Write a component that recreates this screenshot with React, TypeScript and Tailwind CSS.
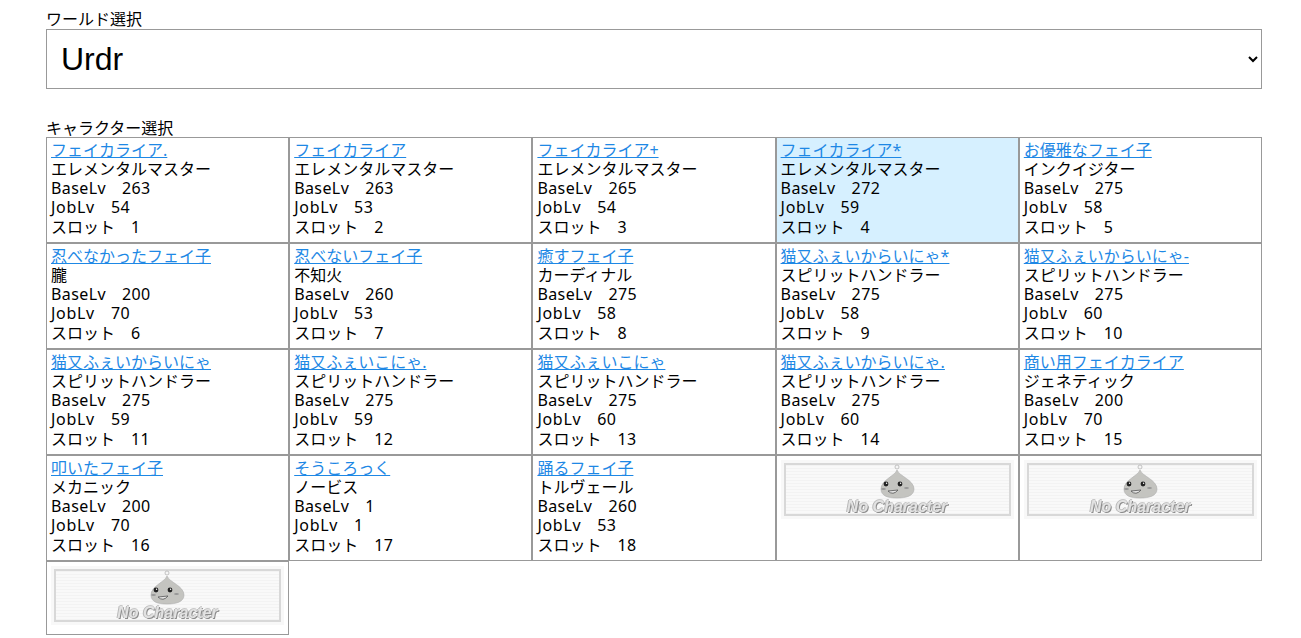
const characters = [
  { name: "フェイカライア.", job: "エレメンタルマスター", base: 263, jobLv: 54 },
  { name: "フェイカライア", job: "エレメンタルマスター", base: 263, jobLv: 53 },
  { name: "フェイカライア+", job: "エレメンタルマスター", base: 265, jobLv: 54 },
  { name: "フェイカライア*", job: "エレメンタルマスター", base: 272, jobLv: 59 },
  { name: "お優雅なフェイ子", job: "インクイジター", base: 275, jobLv: 58 },
  { name: "忍べなかったフェイ子", job: "朧", base: 200, jobLv: 70 },
  { name: "忍べないフェイ子", job: "不知火", base: 260, jobLv: 53 },
  { name: "癒すフェイ子", job: "カーディナル", base: 275, jobLv: 58 },
  { name: "猫又ふぇいからいにゃ*", job: "スピリットハンドラー", base: 275, jobLv: 58 },
  { name: "猫又ふぇいからいにゃ-", job: "スピリットハンドラー", base: 275, jobLv: 60 },
  { name: "猫又ふぇいからいにゃ", job: "スピリットハンドラー", base: 275, jobLv: 59 },
  { name: "猫又ふぇいこにゃ.", job: "スピリットハンドラー", base: 275, jobLv: 59 },
  { name: "猫又ふぇいこにゃ", job: "スピリットハンドラー", base: 275, jobLv: 60 },
  { name: "猫又ふぇいからいにゃ.", job: "スピリットハンドラー", base: 275, jobLv: 60 },
  { name: "商い用フェイカライア", job: "ジェネティック", base: 200, jobLv: 70 },
  { name: "叩いたフェイ子", job: "メカニック", base: 200, jobLv: 70 },
  { name: "そうころっく", job: "ノービス", base: 1, jobLv: 1 },
  { name: "踊るフェイ子", job: "トルヴェール", base: 260, jobLv: 53 },
];

function NoCharacter() {
  return (
    <div className="relative h-[59px] w-[233px] bg-[#f8f8f8] p-[3px]">
      <div className="h-full w-full border-2 border-[#d8d8d8] bg-[repeating-linear-gradient(0deg,#f3f3f3_0px,#f3f3f3_1px,#f9f9f9_1px,#f9f9f9_3px)]" />
      <svg viewBox="0 0 40 40" className="absolute top-[3px] left-[96px] h-[40px] w-[40px] blur-[0.4px]">
        <circle cx="20" cy="4" r="2" fill="#f6f6f6" stroke="#b5b5b5" strokeWidth="0.8" />
        <path d="M20 7 C22 13 37 17 37 26 C37 33 29 35 20 35 C11 35 4 33 4 26 C4 17 18 13 20 7 Z" fill="#c4c4c0" stroke="#adadad" strokeWidth="0.6" />
        <circle cx="9" cy="21" r="2.4" fill="#222" />
        <circle cx="23" cy="21" r="2.4" fill="#222" />
        <circle cx="9.6" cy="20.2" r="0.7" fill="#fff" />
        <circle cx="23.6" cy="20.2" r="0.7" fill="#fff" />
        <path d="M11 28 Q16 33 21 27 Z" fill="#e6e6e6" stroke="#555" strokeWidth="0.8" />
        <ellipse cx="6.5" cy="26" rx="2.4" ry="0.9" fill="#979797" />
        <ellipse cx="29.5" cy="25" rx="2.4" ry="0.9" fill="#979797" />
      </svg>
      <span className="absolute inset-x-0 top-[37px] text-center font-['Liberation_Sans',sans-serif] text-[16px] leading-[20px] font-bold text-[#e2e2e2] italic blur-[0.3px] [text-shadow:1px_1px_0_#8c8c8c,-1px_0_0_#b8b8b8,0_-1px_0_#c8c8c8]">
        No Character
      </span>
    </div>
  );
}

function Cell({ children, active, empty }: { children: React.ReactNode; active?: boolean; empty?: boolean }) {
  return (
    <div
      className={`border border-[#999] px-1 ${empty ? "pt-1 pb-[9px]" : "pt-[2.4px] pb-[5.6px]"} ${active ? "bg-[#d6f0ff]" : "bg-white"}`}
    >
      {children}
    </div>
  );
}

export default function App() {
  return (
    <div className="ml-[46px] w-[1216px] pt-[10px] font-['Noto_Sans','Noto_Sans_CJK_JP',sans-serif] text-base leading-[19.2px] text-black">
      <label className="block">ワールド選択</label>
      <select className="block h-[60px] w-full border border-[#999] bg-white px-[10px] font-['Liberation_Sans',sans-serif] text-[32px] text-black">
        <option>Urdr</option>
      </select>

      <div className="mt-[30px] h-[18.2px]">キャラクター選択</div>
      <div className="grid grid-cols-5">
        {characters.map((c, i) => (
          <Cell key={i} active={i === 3}>
            <a href="#" className="text-[#1e88e5] underline">{c.name}</a>
            <div>{c.job}</div>
            <div><span className="tracking-[0.4px]">BaseLv</span>　<span className="tracking-[0.4px]">{c.base}</span></div>
            <div><span className="tracking-[0.7px]">JobLv</span>　<span className="tracking-[0.4px]">{c.jobLv}</span></div>
            <div>スロット　<span className="tracking-[0.4px]">{i + 1}</span></div>
          </Cell>
        ))}
        <Cell empty><NoCharacter /></Cell>
        <Cell empty><NoCharacter /></Cell>
        <Cell empty><NoCharacter /></Cell>
      </div>
    </div>
  );
}
